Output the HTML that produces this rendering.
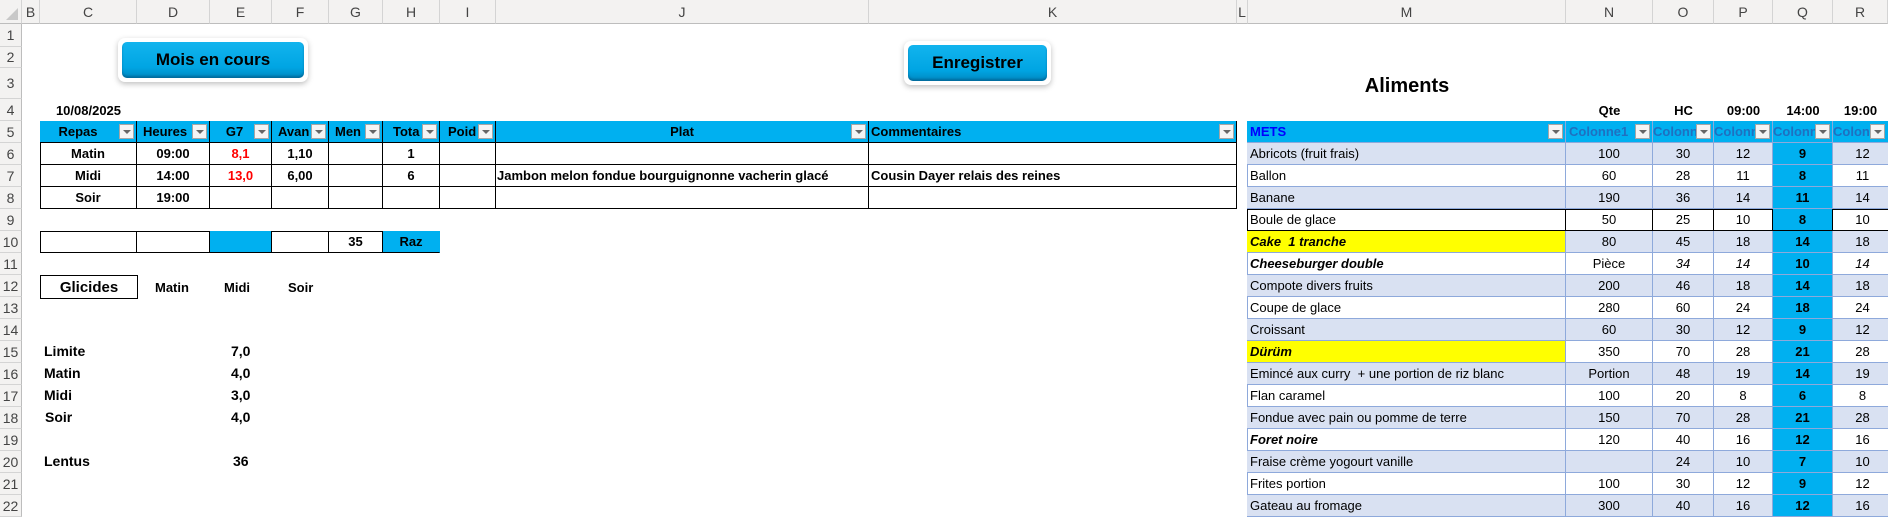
<!DOCTYPE html>
<html><head><meta charset="utf-8"><style>
*{margin:0;padding:0;box-sizing:border-box}
body{width:1888px;height:508px;overflow:hidden;background:#fff;position:relative;font-family:"Liberation Sans",Arial,sans-serif;font-size:13px;color:#000}
.a{position:absolute}
.c{position:absolute;display:flex;align-items:center;justify-content:center;white-space:nowrap;overflow:hidden}
.ch{position:absolute;top:0;height:24px;background:#f3f2f1;border-right:1px solid #d4d4d4;border-bottom:1px solid #bdbdbd;color:#444;font-size:14px;display:flex;align-items:center;justify-content:center}
.rh{position:absolute;left:0;width:22px;background:#f3f2f1;border-bottom:1px solid #d4d4d4;border-right:1px solid #bdbdbd;color:#444;font-size:14px;display:flex;align-items:center;justify-content:center}
.b{font-weight:bold}
.lt{border:solid #000;border-width:0 1px 1px 0;margin-left:-1px;margin-top:-1px}
.hd{background:#00b0f0}
.fb{position:absolute;right:2px;top:3px;width:15px;height:15px;background:#f4f4f4;border:1px solid #a6a6a6;}
.fb:after{content:"";position:absolute;left:3px;top:5px;border-left:4px solid transparent;border-right:4px solid transparent;border-top:4px solid #666}
.rt{border:solid #8ea9db;border-width:0 1px 1px 0;margin-left:-1px;margin-top:-1px}
.bd{background:#d9e1f2}
.q{background:#00b0f0;font-weight:bold}
.btn{position:absolute;border-radius:7px;background:#fff;box-shadow:0 2px 6px rgba(0,0,0,.25);padding:4px}
.btn div{width:100%;height:100%;border-radius:5px;background:linear-gradient(#12b4ee,#00a5e3 70%,#0088c0);display:flex;align-items:center;justify-content:center;font-weight:bold;font-size:17px;box-shadow:inset 0 -2px 2px rgba(0,60,100,.4)}
.ar{font-family:"Liberation Sans",Arial,sans-serif;font-weight:bold;font-size:14px}
.ln{position:absolute;background:#000}
</style></head><body>
<!-- column headers -->
<div class="ch" style="left:0;width:22px"><div style="position:absolute;right:3px;bottom:3px;border-left:12px solid transparent;border-bottom:12px solid #c8c8c8"></div></div>
<div class="ch" style="left:22px;width:18px">B</div>
<div class="ch" style="left:40px;width:97px">C</div>
<div class="ch" style="left:137px;width:73px">D</div>
<div class="ch" style="left:210px;width:62px">E</div>
<div class="ch" style="left:272px;width:57px">F</div>
<div class="ch" style="left:329px;width:54px">G</div>
<div class="ch" style="left:383px;width:57px">H</div>
<div class="ch" style="left:440px;width:56px">I</div>
<div class="ch" style="left:496px;width:373px">J</div>
<div class="ch" style="left:869px;width:368px">K</div>
<div class="ch" style="left:1237px;width:11px">L</div>
<div class="ch" style="left:1248px;width:318px">M</div>
<div class="ch" style="left:1566px;width:87px">N</div>
<div class="ch" style="left:1653px;width:61px">O</div>
<div class="ch" style="left:1714px;width:59px">P</div>
<div class="ch" style="left:1773px;width:60px">Q</div>
<div class="ch" style="left:1833px;width:55px">R</div>
<!-- row headers -->
<div class="rh" style="top:24px;height:23px">1</div>
<div class="rh" style="top:47px;height:21px">2</div>
<div class="rh" style="top:68px;height:31px">3</div>
<div class="rh" style="top:99px;height:22px">4</div>
<div class="rh" style="top:121px;height:22px">5</div>
<div class="rh" style="top:143px;height:22px">6</div>
<div class="rh" style="top:165px;height:22px">7</div>
<div class="rh" style="top:187px;height:22px">8</div>
<div class="rh" style="top:209px;height:22px">9</div>
<div class="rh" style="top:231px;height:22px">10</div>
<div class="rh" style="top:253px;height:22px">11</div>
<div class="rh" style="top:275px;height:22px">12</div>
<div class="rh" style="top:297px;height:22px">13</div>
<div class="rh" style="top:319px;height:22px">14</div>
<div class="rh" style="top:341px;height:22px">15</div>
<div class="rh" style="top:363px;height:22px">16</div>
<div class="rh" style="top:385px;height:22px">17</div>
<div class="rh" style="top:407px;height:22px">18</div>
<div class="rh" style="top:429px;height:22px">19</div>
<div class="rh" style="top:451px;height:22px">20</div>
<div class="rh" style="top:473px;height:22px">21</div>
<div class="rh" style="top:495px;height:22px">22</div>

<!-- buttons -->
<div class="btn" style="left:118px;top:38px;width:190px;height:44px"><div>Mois en cours</div></div>
<div class="btn" style="left:904px;top:41px;width:147px;height:44px"><div>Enregistrer</div></div>

<div class="c b" style="left:40px;top:99px;width:97px;height:22px">10/08/2025</div>
<div class="c b" style="left:1248px;top:68px;width:318px;height:36px;font-size:20px">Aliments</div>

<!-- left table outer lines -->
<div class="ln" style="left:40px;top:121px;width:1197px;height:1px"></div>
<div class="ln" style="left:40px;top:121px;width:1px;height:88px"></div>
<div class="ln" style="left:40px;top:231px;width:343px;height:1px"></div>
<div class="ln" style="left:40px;top:231px;width:1px;height:22px"></div>

<!-- left table header -->
<div class="c b lt hd" style="left:41px;top:122px;width:97px;height:22px;padding-right:20px">Repas<span class="fb"></span></div>
<div class="c b lt hd" style="left:138px;top:122px;width:73px;height:22px;justify-content:flex-start;padding-left:6px">Heures<span class="fb"></span></div>
<div class="c b lt hd" style="left:211px;top:122px;width:62px;height:22px;padding-right:12px">G7<span class="fb"></span></div>
<div class="c b lt hd" style="left:273px;top:122px;width:57px;height:22px;justify-content:flex-start;padding-left:6px">Avan<span class="fb"></span></div>
<div class="c b lt hd" style="left:330px;top:122px;width:54px;height:22px;justify-content:flex-start;padding-left:6px">Men<span class="fb"></span></div>
<div class="c b lt hd" style="left:384px;top:122px;width:57px;height:22px;justify-content:flex-start;padding-left:10px">Tota<span class="fb"></span></div>
<div class="c b lt hd" style="left:441px;top:122px;width:56px;height:22px;justify-content:flex-start;padding-left:8px">Poid<span class="fb"></span></div>
<div class="c b lt hd" style="left:497px;top:122px;width:373px;height:22px">Plat<span class="fb"></span></div>
<div class="c b lt hd" style="left:870px;top:122px;width:368px;height:22px;justify-content:flex-start;padding-left:2px">Commentaires<span class="fb"></span></div>
<!-- left rows -->
<div class="c b lt" style="left:41px;top:144px;width:97px;height:22px">Matin</div>
<div class="c b lt" style="left:138px;top:144px;width:73px;height:22px">09:00</div>
<div class="c b lt" style="left:211px;top:144px;width:62px;height:22px;color:#f00">8,1</div>
<div class="c b lt" style="left:273px;top:144px;width:57px;height:22px">1,10</div>
<div class="c b lt" style="left:330px;top:144px;width:54px;height:22px"></div>
<div class="c b lt" style="left:384px;top:144px;width:57px;height:22px">1</div>
<div class="c b lt" style="left:441px;top:144px;width:56px;height:22px"></div>
<div class="c b lt" style="left:497px;top:144px;width:373px;height:22px"></div>
<div class="c b lt" style="left:870px;top:144px;width:368px;height:22px"></div>

<div class="c b lt" style="left:41px;top:166px;width:97px;height:22px">Midi</div>
<div class="c b lt" style="left:138px;top:166px;width:73px;height:22px">14:00</div>
<div class="c b lt" style="left:211px;top:166px;width:62px;height:22px;color:#f00">13,0</div>
<div class="c b lt" style="left:273px;top:166px;width:57px;height:22px">6,00</div>
<div class="c b lt" style="left:330px;top:166px;width:54px;height:22px"></div>
<div class="c b lt" style="left:384px;top:166px;width:57px;height:22px">6</div>
<div class="c b lt" style="left:441px;top:166px;width:56px;height:22px"></div>
<div class="c b lt" style="left:497px;top:166px;width:373px;height:22px;justify-content:flex-start;padding-left:1px">Jambon melon fondue bourguignonne vacherin glacé</div>
<div class="c b lt" style="left:870px;top:166px;width:368px;height:22px;justify-content:flex-start;padding-left:2px">Cousin Dayer relais des reines</div>

<div class="c b lt" style="left:41px;top:188px;width:97px;height:22px">Soir</div>
<div class="c b lt" style="left:138px;top:188px;width:73px;height:22px">19:00</div>
<div class="c b lt" style="left:211px;top:188px;width:62px;height:22px"></div>
<div class="c b lt" style="left:273px;top:188px;width:57px;height:22px"></div>
<div class="c b lt" style="left:330px;top:188px;width:54px;height:22px"></div>
<div class="c b lt" style="left:384px;top:188px;width:57px;height:22px"></div>
<div class="c b lt" style="left:441px;top:188px;width:56px;height:22px"></div>
<div class="c b lt" style="left:497px;top:188px;width:373px;height:22px"></div>
<div class="c b lt" style="left:870px;top:188px;width:368px;height:22px"></div>

<!-- row 10 -->
<div class="c b lt" style="left:41px;top:232px;width:97px;height:22px"></div>
<div class="c b lt" style="left:138px;top:232px;width:73px;height:22px"></div>
<div class="c b lt hd" style="left:211px;top:232px;width:62px;height:22px"></div>
<div class="c b lt" style="left:273px;top:232px;width:57px;height:22px"></div>
<div class="c b lt" style="left:330px;top:232px;width:54px;height:22px">35</div>
<div class="c b lt hd" style="left:384px;top:232px;width:57px;height:22px;border-right-color:#00b0f0">Raz</div>

<!-- glicides -->
<div class="c ar" style="left:40px;top:275px;width:98px;height:24px;font-size:15px;border:1px solid #000">Glicides</div>
<div class="a ar" style="left:155px;top:280px;font-size:13px">Matin</div>
<div class="a ar" style="left:224px;top:280px;font-size:13px">Midi</div>
<div class="a ar" style="left:288px;top:280px;font-size:13px">Soir</div>
<div class="a ar" style="left:44px;top:343px">Limite</div><div class="a ar" style="left:231px;top:343px">7,0</div>
<div class="a ar" style="left:44px;top:365px">Matin</div><div class="a ar" style="left:231px;top:365px">4,0</div>
<div class="a ar" style="left:44px;top:387px">Midi</div><div class="a ar" style="left:231px;top:387px">3,0</div>
<div class="a ar" style="left:45px;top:409px">Soir</div><div class="a ar" style="left:231px;top:409px">4,0</div>
<div class="a ar" style="left:44px;top:453px">Lentus</div><div class="a ar" style="left:233px;top:453px">36</div>

<!-- right table top labels -->
<div class="c b" style="left:1566px;top:99px;width:87px;height:22px">Qte</div>
<div class="c b" style="left:1653px;top:99px;width:61px;height:22px">HC</div>
<div class="c b" style="left:1714px;top:99px;width:59px;height:22px">09:00</div>
<div class="c b" style="left:1773px;top:99px;width:60px;height:22px">14:00</div>
<div class="c b" style="left:1833px;top:99px;width:55px;height:22px">19:00</div>
<!-- right outer lines -->
<div class="ln" style="left:1247px;top:121px;width:641px;height:1px;background:#8ea9db"></div>
<div class="ln" style="left:1247px;top:121px;width:1px;height:390px;background:#8ea9db"></div>
<!-- right header -->
<div class="c b rt hd" style="left:1248px;top:122px;width:319px;height:22px;justify-content:flex-start;padding-left:3px;color:#0000ff">METS<span class="fb"></span></div>
<div class="c b rt hd" style="left:1567px;top:122px;width:87px;height:22px;justify-content:flex-start;padding-left:3px;color:#1f70c0">Colonne1<span class="fb"></span></div>
<div class="c b rt hd" style="left:1654px;top:122px;width:61px;height:22px;justify-content:flex-start;color:#1f70c0">Colonne<span class="fb"></span></div>
<div class="c b rt hd" style="left:1715px;top:122px;width:59px;height:22px;justify-content:flex-start;color:#1f70c0">Colonne<span class="fb"></span></div>
<div class="c b rt hd" style="left:1774px;top:122px;width:60px;height:22px;justify-content:flex-start;color:#1f70c0">Colonne<span class="fb"></span></div>
<div class="c b rt hd" style="left:1834px;top:122px;width:60px;height:22px;justify-content:flex-start;color:#1f70c0">Colonne<span class="fb" style="right:7px"></span></div>

<!-- right rows -->
<div class="c rt bd" style="left:1248px;top:144px;width:319px;height:22px;justify-content:flex-start;padding-left:3px">Abricots (fruit frais)</div>
<div class="c rt bd" style="left:1567px;top:144px;width:87px;height:22px">100</div>
<div class="c rt bd" style="left:1654px;top:144px;width:61px;height:22px">30</div>
<div class="c rt bd" style="left:1715px;top:144px;width:59px;height:22px">12</div>
<div class="c rt q" style="left:1774px;top:144px;width:60px;height:22px">9</div>
<div class="c rt bd" style="left:1834px;top:144px;width:60px;height:22px">12</div>

<div class="c rt" style="left:1248px;top:166px;width:319px;height:22px;justify-content:flex-start;padding-left:3px">Ballon</div>
<div class="c rt" style="left:1567px;top:166px;width:87px;height:22px">60</div>
<div class="c rt" style="left:1654px;top:166px;width:61px;height:22px">28</div>
<div class="c rt" style="left:1715px;top:166px;width:59px;height:22px">11</div>
<div class="c rt q" style="left:1774px;top:166px;width:60px;height:22px">8</div>
<div class="c rt" style="left:1834px;top:166px;width:60px;height:22px">11</div>

<div class="c rt bd" style="left:1248px;top:188px;width:319px;height:22px;justify-content:flex-start;padding-left:3px">Banane</div>
<div class="c rt bd" style="left:1567px;top:188px;width:87px;height:22px">190</div>
<div class="c rt bd" style="left:1654px;top:188px;width:61px;height:22px">36</div>
<div class="c rt bd" style="left:1715px;top:188px;width:59px;height:22px">14</div>
<div class="c rt q" style="left:1774px;top:188px;width:60px;height:22px">11</div>
<div class="c rt bd" style="left:1834px;top:188px;width:60px;height:22px">14</div>

<div class="ln" style="left:1247px;top:209px;width:641px;height:1px"></div>
<div class="ln" style="left:1247px;top:209px;width:1px;height:22px"></div>
<div class="c lt" style="left:1248px;top:210px;width:319px;height:22px;justify-content:flex-start;padding-left:3px">Boule de glace</div>
<div class="c lt" style="left:1567px;top:210px;width:87px;height:22px">50</div>
<div class="c lt" style="left:1654px;top:210px;width:61px;height:22px">25</div>
<div class="c lt" style="left:1715px;top:210px;width:59px;height:22px">10</div>
<div class="c lt q" style="left:1774px;top:210px;width:60px;height:22px">8</div>
<div class="c lt" style="left:1834px;top:210px;width:60px;height:22px">10</div>

<div class="c rt b" style="left:1248px;top:232px;width:319px;height:22px;justify-content:flex-start;padding-left:3px;background:#ffff00;font-style:italic">Cake&nbsp; 1 tranche</div>
<div class="c rt bd" style="left:1567px;top:232px;width:87px;height:22px">80</div>
<div class="c rt bd" style="left:1654px;top:232px;width:61px;height:22px">45</div>
<div class="c rt bd" style="left:1715px;top:232px;width:59px;height:22px">18</div>
<div class="c rt q" style="left:1774px;top:232px;width:60px;height:22px">14</div>
<div class="c rt bd" style="left:1834px;top:232px;width:60px;height:22px">18</div>

<div class="c rt b" style="left:1248px;top:254px;width:319px;height:22px;justify-content:flex-start;padding-left:3px;font-style:italic">Cheeseburger double</div>
<div class="c rt" style="left:1567px;top:254px;width:87px;height:22px">Pièce</div>
<div class="c rt" style="left:1654px;top:254px;width:61px;height:22px;font-style:italic">34</div>
<div class="c rt" style="left:1715px;top:254px;width:59px;height:22px;font-style:italic">14</div>
<div class="c rt q" style="left:1774px;top:254px;width:60px;height:22px">10</div>
<div class="c rt" style="left:1834px;top:254px;width:60px;height:22px;font-style:italic">14</div>

<div class="c rt bd" style="left:1248px;top:276px;width:319px;height:22px;justify-content:flex-start;padding-left:3px">Compote divers fruits</div>
<div class="c rt bd" style="left:1567px;top:276px;width:87px;height:22px">200</div>
<div class="c rt bd" style="left:1654px;top:276px;width:61px;height:22px">46</div>
<div class="c rt bd" style="left:1715px;top:276px;width:59px;height:22px">18</div>
<div class="c rt q" style="left:1774px;top:276px;width:60px;height:22px">14</div>
<div class="c rt bd" style="left:1834px;top:276px;width:60px;height:22px">18</div>

<div class="c rt" style="left:1248px;top:298px;width:319px;height:22px;justify-content:flex-start;padding-left:3px">Coupe de glace</div>
<div class="c rt" style="left:1567px;top:298px;width:87px;height:22px">280</div>
<div class="c rt" style="left:1654px;top:298px;width:61px;height:22px">60</div>
<div class="c rt" style="left:1715px;top:298px;width:59px;height:22px">24</div>
<div class="c rt q" style="left:1774px;top:298px;width:60px;height:22px">18</div>
<div class="c rt" style="left:1834px;top:298px;width:60px;height:22px">24</div>

<div class="c rt bd" style="left:1248px;top:320px;width:319px;height:22px;justify-content:flex-start;padding-left:3px">Croissant</div>
<div class="c rt bd" style="left:1567px;top:320px;width:87px;height:22px">60</div>
<div class="c rt bd" style="left:1654px;top:320px;width:61px;height:22px">30</div>
<div class="c rt bd" style="left:1715px;top:320px;width:59px;height:22px">12</div>
<div class="c rt q" style="left:1774px;top:320px;width:60px;height:22px">9</div>
<div class="c rt bd" style="left:1834px;top:320px;width:60px;height:22px">12</div>

<div class="c rt b" style="left:1248px;top:342px;width:319px;height:22px;justify-content:flex-start;padding-left:3px;background:#ffff00;font-style:italic">Dürüm</div>
<div class="c rt" style="left:1567px;top:342px;width:87px;height:22px">350</div>
<div class="c rt" style="left:1654px;top:342px;width:61px;height:22px">70</div>
<div class="c rt" style="left:1715px;top:342px;width:59px;height:22px">28</div>
<div class="c rt q" style="left:1774px;top:342px;width:60px;height:22px">21</div>
<div class="c rt" style="left:1834px;top:342px;width:60px;height:22px">28</div>

<div class="c rt bd" style="left:1248px;top:364px;width:319px;height:22px;justify-content:flex-start;padding-left:3px">Emincé aux curry&nbsp; + une portion de riz blanc</div>
<div class="c rt bd" style="left:1567px;top:364px;width:87px;height:22px">Portion</div>
<div class="c rt bd" style="left:1654px;top:364px;width:61px;height:22px">48</div>
<div class="c rt bd" style="left:1715px;top:364px;width:59px;height:22px">19</div>
<div class="c rt q" style="left:1774px;top:364px;width:60px;height:22px">14</div>
<div class="c rt bd" style="left:1834px;top:364px;width:60px;height:22px">19</div>

<div class="c rt" style="left:1248px;top:386px;width:319px;height:22px;justify-content:flex-start;padding-left:3px">Flan caramel</div>
<div class="c rt" style="left:1567px;top:386px;width:87px;height:22px">100</div>
<div class="c rt" style="left:1654px;top:386px;width:61px;height:22px">20</div>
<div class="c rt" style="left:1715px;top:386px;width:59px;height:22px">8</div>
<div class="c rt q" style="left:1774px;top:386px;width:60px;height:22px">6</div>
<div class="c rt" style="left:1834px;top:386px;width:60px;height:22px">8</div>

<div class="c rt bd" style="left:1248px;top:408px;width:319px;height:22px;justify-content:flex-start;padding-left:3px">Fondue avec pain ou pomme de terre</div>
<div class="c rt bd" style="left:1567px;top:408px;width:87px;height:22px">150</div>
<div class="c rt bd" style="left:1654px;top:408px;width:61px;height:22px">70</div>
<div class="c rt bd" style="left:1715px;top:408px;width:59px;height:22px">28</div>
<div class="c rt q" style="left:1774px;top:408px;width:60px;height:22px">21</div>
<div class="c rt bd" style="left:1834px;top:408px;width:60px;height:22px">28</div>

<div class="c rt b" style="left:1248px;top:430px;width:319px;height:22px;justify-content:flex-start;padding-left:3px;font-style:italic">Foret noire</div>
<div class="c rt" style="left:1567px;top:430px;width:87px;height:22px">120</div>
<div class="c rt" style="left:1654px;top:430px;width:61px;height:22px">40</div>
<div class="c rt" style="left:1715px;top:430px;width:59px;height:22px">16</div>
<div class="c rt q" style="left:1774px;top:430px;width:60px;height:22px">12</div>
<div class="c rt" style="left:1834px;top:430px;width:60px;height:22px">16</div>

<div class="c rt bd" style="left:1248px;top:452px;width:319px;height:22px;justify-content:flex-start;padding-left:3px">Fraise crème yogourt vanille</div>
<div class="c rt bd" style="left:1567px;top:452px;width:87px;height:22px"></div>
<div class="c rt bd" style="left:1654px;top:452px;width:61px;height:22px">24</div>
<div class="c rt bd" style="left:1715px;top:452px;width:59px;height:22px">10</div>
<div class="c rt q" style="left:1774px;top:452px;width:60px;height:22px">7</div>
<div class="c rt bd" style="left:1834px;top:452px;width:60px;height:22px">10</div>

<div class="c rt" style="left:1248px;top:474px;width:319px;height:22px;justify-content:flex-start;padding-left:3px">Frites portion</div>
<div class="c rt" style="left:1567px;top:474px;width:87px;height:22px">100</div>
<div class="c rt" style="left:1654px;top:474px;width:61px;height:22px">30</div>
<div class="c rt" style="left:1715px;top:474px;width:59px;height:22px">12</div>
<div class="c rt q" style="left:1774px;top:474px;width:60px;height:22px">9</div>
<div class="c rt" style="left:1834px;top:474px;width:60px;height:22px">12</div>

<div class="c rt bd" style="left:1248px;top:496px;width:319px;height:22px;justify-content:flex-start;padding-left:3px">Gateau au fromage</div>
<div class="c rt bd" style="left:1567px;top:496px;width:87px;height:22px">300</div>
<div class="c rt bd" style="left:1654px;top:496px;width:61px;height:22px">40</div>
<div class="c rt bd" style="left:1715px;top:496px;width:59px;height:22px">16</div>
<div class="c rt q" style="left:1774px;top:496px;width:60px;height:22px">12</div>
<div class="c rt bd" style="left:1834px;top:496px;width:60px;height:22px">16</div>
</body></html>
